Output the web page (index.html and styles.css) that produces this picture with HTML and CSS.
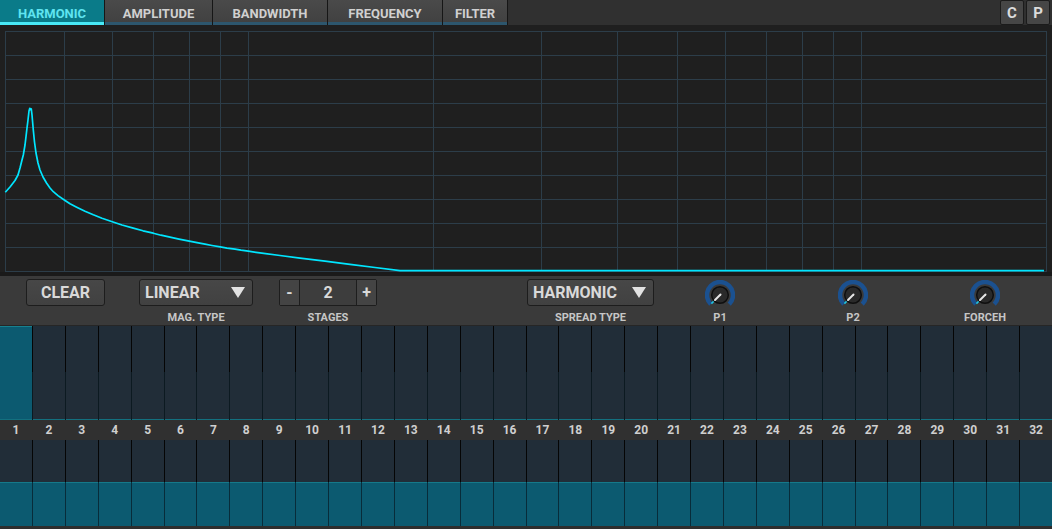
FILE: index.html
```html
<!DOCTYPE html>
<html>
<head>
<meta charset="utf-8">
<title>Harmonic</title>
<link rel="stylesheet" href="styles.css">
</head>
<body>
<div class="app">
  <div class="topbar">
    <div class="tabs">
      <div class="tab tab-harmonic active">HARMONIC</div>
      <div class="tab tab-amplitude">AMPLITUDE</div>
      <div class="tab tab-bandwidth">BANDWIDTH</div>
      <div class="tab tab-frequency">FREQUENCY</div>
      <div class="tab tab-filter">FILTER</div>
    </div>
    <div class="tool-btns">
      <div class="tbtn">C</div>
      <div class="tbtn">P</div>
    </div>
  </div>

  <div class="graph">
    <svg width="1052" height="251" viewBox="0 25 1052 251" xmlns="http://www.w3.org/2000/svg">
      <rect x="0" y="25" width="1052" height="251" fill="#1f1f1f"/>
      <rect x="0" y="272" width="1052" height="4" fill="#1a1a1a"/>
      <g stroke="#2c3d49" stroke-width="1" fill="none">
        <rect x="5.5" y="31.5" width="1041" height="240"/>
        <line x1="5" y1="55.5" x2="1047" y2="55.5"/>
        <line x1="5" y1="79.5" x2="1047" y2="79.5"/>
        <line x1="5" y1="103.5" x2="1047" y2="103.5"/>
        <line x1="5" y1="127.5" x2="1047" y2="127.5"/>
        <line x1="5" y1="151.5" x2="1047" y2="151.5"/>
        <line x1="5" y1="175.5" x2="1047" y2="175.5"/>
        <line x1="5" y1="199.5" x2="1047" y2="199.5"/>
        <line x1="5" y1="223.5" x2="1047" y2="223.5"/>
        <line x1="5" y1="247.5" x2="1047" y2="247.5"/>
        <line x1="64.5" y1="31" x2="64.5" y2="272"/>
        <line x1="112.5" y1="31" x2="112.5" y2="272"/>
        <line x1="153.5" y1="31" x2="153.5" y2="272"/>
        <line x1="189.5" y1="31" x2="189.5" y2="272"/>
        <line x1="220.5" y1="31" x2="220.5" y2="272"/>
        <line x1="248.5" y1="31" x2="248.5" y2="272"/>
        <line x1="433.5" y1="31" x2="433.5" y2="272"/>
        <line x1="541.5" y1="31" x2="541.5" y2="272"/>
        <line x1="617.5" y1="31" x2="617.5" y2="272"/>
        <line x1="677.5" y1="31" x2="677.5" y2="272"/>
        <line x1="725.5" y1="31" x2="725.5" y2="272"/>
        <line x1="766.5" y1="31" x2="766.5" y2="272"/>
        <line x1="802.5" y1="31" x2="802.5" y2="272"/>
        <line x1="833.5" y1="31" x2="833.5" y2="272"/>
        <line x1="861.5" y1="31" x2="861.5" y2="272"/>
      </g>
      <polyline fill="none" stroke="#00e6ff" stroke-width="1.7" stroke-linejoin="round"
        points="5.3,192.3 10,187 15,180.5 18,175 20,168 22,160 23.3,155 25,145 26,136.7 27,128 28,120 29,111 29.8,108.3 30.5,109.5 31.3,109 32,115 33.3,130 34.5,142 36,153 38,163 40,170 43,177 46.7,183.3 50,188 53.3,191.7 58,195.6 64.3,200 70,203.8 76.7,207.2 85,211.2 93.3,214.8 102,218.3 112.3,221.8 122,225 133.3,228.1 143,230.8 153.3,233.2 161,235.2 170,237.1 179,239.1 189.3,241.2 197,242.7 205,244.2 212,245.5 220.3,246.9 227,248.1 235,249.2 241,250.2 248.3,251.2 260,252.9 280,255.5 300,258.1 325,261.2 350,264.3 375,267.5 400,270.6 1044,270.6"/>
    </svg>
  </div>

  <div class="controls">
    <div class="group g-clear">
      <div class="btn">CLEAR</div>
    </div>
    <div class="group g-mag">
      <div class="btn dropdown">
        <span>LINEAR</span>
        <svg class="tri" width="14" height="11" viewBox="0 0 14 11"><polygon points="0,0 14,0 7,11" fill="#e2e2e2"/></svg>
      </div>
      <div class="label">MAG. TYPE</div>
    </div>
    <div class="group g-stages">
      <div class="stepper">
        <div class="step-btn">-</div>
        <div class="step-val">2</div>
        <div class="step-btn plus">+</div>
      </div>
      <div class="label">STAGES</div>
    </div>
    <div class="group g-spread">
      <div class="btn dropdown">
        <span>HARMONIC</span>
        <svg class="tri" width="14" height="11" viewBox="0 0 14 11"><polygon points="0,0 14,0 7,11" fill="#e2e2e2"/></svg>
      </div>
      <div class="label">SPREAD TYPE</div>
    </div>
    <div class="group knob-group g-p1">
      <svg class="knob" width="30" height="30" viewBox="0 0 30 30">
        <path d="M5.8 24.2 A13 13 0 1 1 24.2 24.2" fill="none" stroke="#1b5190" stroke-width="4.5"/>
        <circle cx="15" cy="15" r="8.3" fill="#2a2a2a" stroke="#0f0f0f" stroke-width="1.5"/>
        <line x1="15.5" y1="14.5" x2="10" y2="20" stroke="#e6e6e6" stroke-width="2" stroke-linecap="round"/>
        <line x1="8.6" y1="21.4" x2="6.4" y2="23.6" stroke="#1fc4e0" stroke-width="1.5"/>
      </svg>
      <div class="label">P1</div>
    </div>
    <div class="group knob-group g-p2">
      <svg class="knob" width="30" height="30" viewBox="0 0 30 30">
        <path d="M5.8 24.2 A13 13 0 1 1 24.2 24.2" fill="none" stroke="#1b5190" stroke-width="4.5"/>
        <circle cx="15" cy="15" r="8.3" fill="#2a2a2a" stroke="#0f0f0f" stroke-width="1.5"/>
        <line x1="15.5" y1="14.5" x2="10" y2="20" stroke="#e6e6e6" stroke-width="2" stroke-linecap="round"/>
        <line x1="8.6" y1="21.4" x2="6.4" y2="23.6" stroke="#1fc4e0" stroke-width="1.5"/>
      </svg>
      <div class="label">P2</div>
    </div>
    <div class="group knob-group g-forceh">
      <svg class="knob" width="30" height="30" viewBox="0 0 30 30">
        <path d="M5.8 24.2 A13 13 0 1 1 24.2 24.2" fill="none" stroke="#1b5190" stroke-width="4.5"/>
        <circle cx="15" cy="15" r="8.3" fill="#2a2a2a" stroke="#0f0f0f" stroke-width="1.5"/>
        <line x1="15.5" y1="14.5" x2="10" y2="20" stroke="#e6e6e6" stroke-width="2" stroke-linecap="round"/>
        <line x1="8.6" y1="21.4" x2="6.4" y2="23.6" stroke="#1fc4e0" stroke-width="1.5"/>
      </svg>
      <div class="label">FORCEH</div>
    </div>
  </div>

  <div class="bars bars-top">
    <div class="cell full"></div><div class="cell"></div><div class="cell"></div><div class="cell"></div>
    <div class="cell"></div><div class="cell"></div><div class="cell"></div><div class="cell"></div>
    <div class="cell"></div><div class="cell"></div><div class="cell"></div><div class="cell"></div>
    <div class="cell"></div><div class="cell"></div><div class="cell"></div><div class="cell"></div>
    <div class="cell"></div><div class="cell"></div><div class="cell"></div><div class="cell"></div>
    <div class="cell"></div><div class="cell"></div><div class="cell"></div><div class="cell"></div>
    <div class="cell"></div><div class="cell"></div><div class="cell"></div><div class="cell"></div>
    <div class="cell"></div><div class="cell"></div><div class="cell"></div><div class="cell"></div>
  </div>

  <div class="numbers">
    <span>1</span><span>2</span><span>3</span><span>4</span><span>5</span><span>6</span><span>7</span><span>8</span>
    <span>9</span><span>10</span><span>11</span><span>12</span><span>13</span><span>14</span><span>15</span><span>16</span>
    <span>17</span><span>18</span><span>19</span><span>20</span><span>21</span><span>22</span><span>23</span><span>24</span>
    <span>25</span><span>26</span><span>27</span><span>28</span><span>29</span><span>30</span><span>31</span><span>32</span>
  </div>

  <div class="bars bars-bottom">
    <div class="cell"><div class="fill" style="height:44px"></div></div><div class="cell"><div class="fill" style="height:44px"></div></div><div class="cell"><div class="fill" style="height:44px"></div></div><div class="cell"><div class="fill" style="height:44px"></div></div>
    <div class="cell"><div class="fill" style="height:44px"></div></div><div class="cell"><div class="fill" style="height:44px"></div></div><div class="cell"><div class="fill" style="height:44px"></div></div><div class="cell"><div class="fill" style="height:44px"></div></div>
    <div class="cell"><div class="fill" style="height:44px"></div></div><div class="cell"><div class="fill" style="height:44px"></div></div><div class="cell"><div class="fill" style="height:44px"></div></div><div class="cell"><div class="fill" style="height:44px"></div></div>
    <div class="cell"><div class="fill" style="height:44px"></div></div><div class="cell"><div class="fill" style="height:44px"></div></div><div class="cell"><div class="fill" style="height:44px"></div></div><div class="cell"><div class="fill" style="height:44px"></div></div>
    <div class="cell"><div class="fill" style="height:44px"></div></div><div class="cell"><div class="fill" style="height:44px"></div></div><div class="cell"><div class="fill" style="height:44px"></div></div><div class="cell"><div class="fill" style="height:44px"></div></div>
    <div class="cell"><div class="fill" style="height:44px"></div></div><div class="cell"><div class="fill" style="height:44px"></div></div><div class="cell"><div class="fill" style="height:44px"></div></div><div class="cell"><div class="fill" style="height:44px"></div></div>
    <div class="cell"><div class="fill" style="height:44px"></div></div><div class="cell"><div class="fill" style="height:44px"></div></div><div class="cell"><div class="fill" style="height:44px"></div></div><div class="cell"><div class="fill" style="height:44px"></div></div>
    <div class="cell"><div class="fill" style="height:44px"></div></div><div class="cell"><div class="fill" style="height:44px"></div></div><div class="cell"><div class="fill" style="height:44px"></div></div><div class="cell"><div class="fill" style="height:44px"></div></div>
  </div>
  <div class="footer"></div>
</div>
</body>
</html>
```

FILE: styles.css
```css
html, body {
  margin: 0;
  padding: 0;
  background: #1e1e1e;
  overflow: hidden;
}

.app {
  width: 1052px;
  height: 529px;
  display: flex;
  flex-direction: column;
  background: #2e2e2e;
  font-family: Roboto, "Noto Sans", "Liberation Sans", sans-serif;
  font-weight: 700;
}

/* ---------- top bar ---------- */
.topbar {
  height: 25px;
  flex: none;
  display: flex;
  background: #303030;
}

.tabs {
  display: flex;
  gap: 1px;
  background: #161616;
  padding-right: 1px;
}

.tab {
  box-sizing: border-box;
  height: 25px;
  padding-top: 4px;
  display: flex;
  align-items: center;
  justify-content: center;
  font-size: 13px;
  color: #d0d0d0;
  background: linear-gradient(#4a4a4a, #414141);
  border-bottom: 3px solid #2d566d;
}

.tab.active {
  background: #0a7b89;
  color: #5fe4f0;
  border-bottom-color: #48e9f6;
}

.tab-harmonic { width: 104px; }
.tab-amplitude { width: 107px; }
.tab-bandwidth { width: 114px; }
.tab-frequency { width: 114px; }
.tab-filter { width: 64px; }

.tool-btns {
  margin-left: auto;
  display: flex;
  gap: 2px;
  padding-right: 2px;
}

.tbtn {
  box-sizing: border-box;
  width: 24px;
  height: 25px;
  display: flex;
  align-items: center;
  justify-content: center;
  background: #464646;
  border: 1px solid #1b1b1b;
  border-radius: 2px;
  color: #dcdcdc;
  font-size: 15px;
}

/* ---------- graph ---------- */
.graph {
  height: 251px;
  flex: none;
}

.graph svg {
  display: block;
}

/* ---------- controls ---------- */
.controls {
  box-sizing: border-box;
  height: 50px;
  flex: none;
  display: flex;
  align-items: flex-start;
  padding: 3px 0 0 26px;
  background: #3a3a3a;
  border-bottom: 1px solid #262626;
}

.group {
  display: flex;
  flex-direction: column;
  align-items: center;
}

.g-clear { width: 79px; }
.g-mag { width: 114px; margin-left: 34px; }
.g-stages { width: 98px; margin-left: 26px; }
.g-spread { width: 127px; margin-left: 150px; }
.g-p1 { width: 60px; margin-left: 36px; }
.g-p2 { width: 60px; margin-left: 73px; }
.g-forceh { width: 60px; margin-left: 72px; }

.btn {
  box-sizing: border-box;
  width: 100%;
  height: 27px;
  display: flex;
  align-items: center;
  justify-content: center;
  background: linear-gradient(#474747, #414141);
  border: 1px solid #1d1d1d;
  border-radius: 3px;
  color: #d9d9d9;
  font-size: 16px;
}

.dropdown {
  justify-content: space-between;
  padding: 0 7px 0 5px;
}

.tri {
  display: block;
}

.label {
  margin-top: 5px;
  font-size: 11px;
  line-height: 13px;
  color: #c6c6c6;
}

.stepper {
  box-sizing: border-box;
  width: 100%;
  height: 27px;
  display: flex;
  border: 1px solid #1d1d1d;
  border-radius: 2px;
  background: #3d3d3d;
  color: #d9d9d9;
  font-size: 16px;
}

.step-btn {
  width: 19px;
  display: flex;
  align-items: center;
  justify-content: center;
  background: #444444;
  border-right: 1px solid #1d1d1d;
}

.step-btn.plus {
  border-right: none;
  border-left: 1px solid #1d1d1d;
}

.step-val {
  flex: 1;
  display: flex;
  align-items: center;
  justify-content: center;
}

.knob-group .knob {
  display: block;
  margin-top: 1px;
}

.knob-group .label {
  margin-top: 1px;
}

/* ---------- bars ---------- */
.bars {
  display: grid;
  grid-template-columns: repeat(32, 1fr);
  column-gap: 1px;
  flex: none;
}

.bars-top {
  height: 94px;
  background: linear-gradient(#050505 0 46px, #0c1a21 46px);
}

.bars-top .cell {
  background: #212d38;
  border-bottom: 1px solid #13707f;
}

.bars-top .cell.full {
  background: #0c5a70;
  box-shadow: inset 0 1px 0 #17808f;
}

.numbers {
  height: 20px;
  flex: none;
  display: grid;
  grid-template-columns: repeat(32, 1fr);
  column-gap: 1px;
  background: #303030;
  color: #cfcfcf;
  font-size: 12px;
  line-height: 20px;
  text-align: center;
}

.bars-bottom {
  height: 86px;
  background: linear-gradient(#050505 0 42px, #082c3a 42px);
}

.bars-bottom .cell {
  background: #212d38;
  display: flex;
  align-items: flex-end;
}

.fill {
  width: 100%;
  box-sizing: border-box;
  background: #0c5a70;
  border-top: 1px solid #15798a;
}

.footer {
  height: 3px;
  flex: none;
  background: #2e2e2e;
}
```
